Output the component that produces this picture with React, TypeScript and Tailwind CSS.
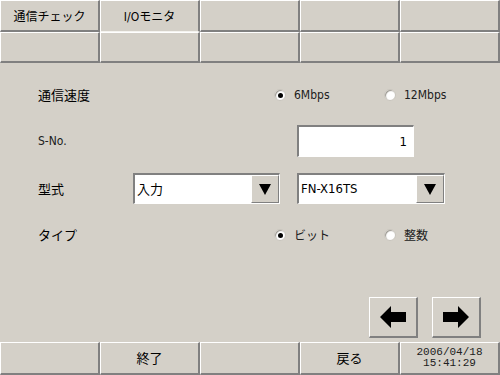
import React from "react";

const font = "font-['MS_Gothic','Noto_Sans_CJK_JP',sans-serif]";
const latin = "font-['DejaVu_Sans_Condensed','DejaVu_Sans',sans-serif] [font-stretch:condensed]";

function NavCell({ label, active }: { label?: React.ReactNode; active?: boolean }) {
  return (
    <div
      className={`flex-1 h-full flex items-center justify-center text-[12px] text-black border-l border-l-white border-r-2 border-r-[#808080] ${
        active ? "border-b border-b-[#f4f3ef]" : "border-b-2 border-b-[#808080]"
      } border-t border-t-white`}
    >
      {label}
    </div>
  );
}

function Radio({ checked, label, isLatin }: { checked?: boolean; label: string; isLatin?: boolean }) {
  return (
    <div className="flex items-center w-[110px]">
      <div className="w-[12px] h-[12px] rounded-full bg-white border border-[#c8c4bc] shadow-[inset_1px_1px_1px_#9a978f] flex items-center justify-center">
        {checked && <div className="w-[5px] h-[5px] rounded-full bg-black" />}
      </div>
      <span className={`ml-[8px] text-[12px] text-[#202020] ${isLatin ? latin : ""}`}>{label}</span>
    </div>
  );
}

function Select({ value, width, isLatin }: { value: string; width: string; isLatin?: boolean }) {
  return (
    <div className={`${width} h-[31px] flex bg-white border-t-2 border-l-2 border-t-[#808080] border-l-[#808080] border-b border-r border-b-white border-r-white`}>
      <div className={`flex-1 flex items-center pl-[2px] text-[13px] text-black ${isLatin ? latin : ""}`}>{value}</div>
      <div className="w-[28px] h-full bg-[#d4d0c8] border-t border-l border-t-white border-l-white border-r border-b border-r-[#808080] border-b-[#808080] flex items-center justify-center">
        <svg width="12" height="11" viewBox="0 0 12 11">
          <polygon points="0,0 12,0 6,11" fill="#000" />
        </svg>
      </div>
    </div>
  );
}

function ArrowButton({ dir }: { dir: "left" | "right" }) {
  return (
    <div className="w-[49px] h-[41px] bg-[#d4d0c8] border-t border-l border-t-white border-l-white border-r-2 border-b-2 border-r-[#808080] border-b-[#808080] flex items-center justify-center">
      <svg width="26" height="22" viewBox="0 0 26 22">
        {dir === "left" ? (
          <polygon points="0,11 11,0 11,6 26,6 26,16 11,16 11,22" fill="#000" />
        ) : (
          <polygon points="26,11 15,0 15,6 0,6 0,16 15,16 15,22" fill="#000" />
        )}
      </svg>
    </div>
  );
}

function BottomCell({ children }: { children?: React.ReactNode }) {
  return (
    <div className="flex-1 h-full flex items-center justify-center text-[13px] text-black border-t border-l border-t-white border-l-white border-r-2 border-b-2 border-r-[#808080] border-b-[#808080]">
      {children}
    </div>
  );
}

export default function App() {
  return (
    <div className={`w-[500px] h-[375px] bg-[#d4d0c8] flex flex-col overflow-hidden ${font}`}>
      {/* Tabs */}
      <div className="flex h-[32px]">
        <NavCell label="通信チェック" />
        <NavCell
          label={
            <span>
              <span className={latin}>I/O</span>モニタ
            </span>
          }
          active
        />
        <NavCell />
        <NavCell />
        <NavCell />
      </div>
      <div className="flex h-[31px]">
        <NavCell />
        <NavCell />
        <NavCell />
        <NavCell />
        <NavCell />
      </div>

      {/* Form */}
      <div className="pt-[20px] pl-[38px]">
        <div className="flex items-center h-[24px]">
          <div className="w-[236px] text-[13px] text-black">通信速度</div>
          <Radio checked label="6Mbps" isLatin />
          <Radio label="12Mbps" isLatin />
        </div>

        <div className="flex items-center h-[32px] mt-[18px]">
          <div className={`w-[259px] text-[12px] text-[#202020] ${latin}`}>S-No.</div>
          <div className={`w-[117px] h-[32px] bg-white border-t-2 border-l-2 border-t-[#808080] border-l-[#808080] border-b border-r border-b-white border-r-white flex items-center justify-end pr-[6px] text-[13px] text-black ${latin}`}>
            1
          </div>
        </div>

        <div className="flex items-center h-[31px] mt-[16px]">
          <div className="w-[95px] text-[13px] text-black">型式</div>
          <Select value="入力" width="w-[147px]" />
          <div className="w-[17px]" />
          <Select value="FN-X16TS" width="w-[148px]" isLatin />
        </div>

        <div className="flex items-center h-[24px] mt-[19px]">
          <div className="w-[236px] text-[13px] text-black">タイプ</div>
          <Radio checked label="ビット" />
          <Radio label="整数" />
        </div>
      </div>

      {/* Arrows */}
      <div className="flex justify-end gap-[14px] pr-[19px] mt-[50px]">
        <ArrowButton dir="left" />
        <ArrowButton dir="right" />
      </div>

      {/* Bottom bar */}
      <div className="flex h-[33px] mt-auto">
        <BottomCell />
        <BottomCell>終了</BottomCell>
        <BottomCell />
        <BottomCell>戻る</BottomCell>
        <BottomCell>
          <div className="font-['Liberation_Mono',monospace] text-[11px] leading-[11px] text-center text-[#202020]">
            2006/04/18
            <br />
            15:41:29
          </div>
        </BottomCell>
      </div>
    </div>
  );
}
